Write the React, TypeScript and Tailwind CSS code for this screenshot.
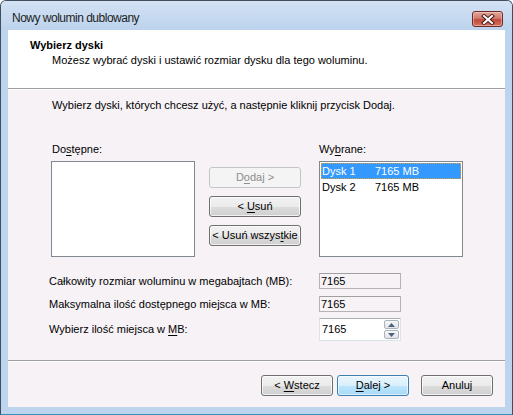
import React from 'react';

const font = { fontFamily: '"Liberation Sans", Arial, sans-serif' };

const Btn = ({ children, w = 'w-[92px]', variant = 'normal' }: { children: React.ReactNode; w?: string; variant?: 'normal' | 'disabled' | 'default' }) => {
    const base = `${w} h-[21px] rounded-[3px] border text-[11px] flex items-center justify-center leading-none`;
    if (variant === 'disabled') {
        return <div className={`${base} border-[#c3c6c9] bg-[#f4f4f4] text-[#8d8d8d]`}><span>{children}</span></div>;
    }
    if (variant === 'default') {
        return (
            <div className={`${base} border-[#3c7fb1] bg-[linear-gradient(to_bottom,#eaf6fd_0%,#d9f0fc_50%,#bee6fd_51%,#a7d9f5_100%)] text-black shadow-[inset_0_0_0_1px_rgba(255,255,255,0.6)]`}>
                <span>{children}</span>
            </div>
        );
    }
    return (
        <div className={`${base} border-[#707070] bg-[linear-gradient(to_bottom,#f2f2f2_0%,#ebebeb_50%,#dddddd_51%,#cfcfcf_100%)] text-black shadow-[inset_0_0_0_1px_rgba(255,255,255,0.7)]`}>
            <span>{children}</span>
        </div>
    );
};

const U = ({ children }: { children: React.ReactNode }) => <span className="underline underline-offset-[2px]">{children}</span>;

const CloseGlyph = () => (
    <svg width="14" height="11" viewBox="0 0 14 11">
        <path d="M3 2 L11 9 M11 2 L3 9" stroke="#4a1d18" strokeWidth="4" strokeLinecap="square" fill="none" />
        <path d="M3 2 L11 9 M11 2 L3 9" stroke="#ffffff" strokeWidth="2" strokeLinecap="square" fill="none" />
    </svg>
);

const SpinArrow = ({ up }: { up?: boolean }) => (
    <svg width="7" height="4" viewBox="0 0 7 4">
        <path d={up ? 'M0 4 L3.5 0 L7 4 Z' : 'M0 0 L3.5 4 L7 0 Z'} fill="#4d6185" />
    </svg>
);

export default function App() {
    return (
        <div className="w-[513px] h-[415px] flex flex-col bg-[#bdd4ef] border border-[#434e5c] border-b-[#3a8db3] rounded-t-[6px] overflow-hidden text-black" style={font}>
            {/* Title bar */}
            <div className="h-[29px] flex items-start bg-[linear-gradient(to_bottom,#d3e2f4,#bcd2ed)]">
                <div className="pl-[11px] pt-[10px] text-[12px] leading-[15px] tracking-[-0.5px] text-[#1e1e1e]">
                    Nowy wolumin dublowany
                </div>
                <div className="ml-auto mr-[9px] mt-[10px] w-[31px] h-[16px] rounded-[3px] border border-[#6d2b24] bg-[linear-gradient(to_bottom,#e4a59b_0%,#d27a6e_45%,#c2483a_55%,#d37561_100%)] flex items-center justify-center shadow-[inset_0_0_0_1px_rgba(255,220,210,0.45)]">
                    <CloseGlyph />
                </div>
            </div>

            {/* Client area */}
            <div className="flex-1 mx-[7px] mb-[7px] flex flex-col bg-[#f6f2f6]">
                <div className="h-[58px] bg-white pl-[22px] pt-[9px]">
                    <div className="text-[11px] font-bold leading-[13px]">Wybierz dyski</div>
                    <div className="text-[11px] leading-[13px] mt-[2px] pl-[22px]">Możesz wybrać dyski i ustawić rozmiar dysku dla tego woluminu.</div>
                </div>
                <div className="h-px bg-[#a0a0a0]" />
                <div className="h-px bg-white" />

                <div className="flex-1 flex flex-col pl-[43px] text-[11px] leading-[13px]">
                    <div className="mt-[9px] pl-[1px]">Wybierz dyski, których chcesz użyć, a następnie kliknij przycisk Dodaj.</div>

                    <div className="mt-[31px] flex items-start">
                        <div className="flex flex-col">
                            <div className="pl-[1px]">Do<U>s</U>tępne:</div>
                            <div className="mt-[5px] w-[144px] h-[96px] bg-white border border-[#828790]" />
                        </div>
                        <div className="ml-[14px] mt-[24px] flex flex-col gap-[8px]">
                            <Btn variant="disabled">D<U>o</U>daj &gt;</Btn>
                            <Btn>&lt; <U>U</U>suń</Btn>
                            <Btn>&lt; Usuń wszys<U>t</U>kie</Btn>
                        </div>
                        <div className="ml-[18px] flex flex-col">
                            <div>Wy<U>b</U>rane:</div>
                            <div className="mt-[5px] w-[144px] h-[96px] bg-white border border-[#828790] p-[1px]">
                                <div className="h-[16px] flex items-center bg-[#3399ff] text-white outline-1 outline-dotted outline-[#d8a040] -outline-offset-1">
                                    <span className="w-[54px] pl-[1px]">Dysk 1</span>
                                    <span>7165 MB</span>
                                </div>
                                <div className="h-[16px] flex items-center">
                                    <span className="w-[54px] pl-[1px]">Dysk 2</span>
                                    <span>7165 MB</span>
                                </div>
                            </div>
                        </div>
                    </div>

                    <div className="mt-[16px] -ml-[2px] flex flex-col gap-[7px]">
                        <div className="flex items-center">
                            <div className="w-[270px]">Całkowity rozmiar woluminu w megabajtach (MB):</div>
                            <div className="w-[82px] h-[16px] border border-[#b4b4b4] border-t-[#a0a0a0] flex items-center pl-[1px]">7165</div>
                        </div>
                        <div className="flex items-center">
                            <div className="w-[270px]">Maksymalna ilość dostępnego miejsca w MB:</div>
                            <div className="w-[82px] h-[16px] border border-[#b4b4b4] border-t-[#a0a0a0] flex items-center pl-[1px]">7165</div>
                        </div>
                        <div className="flex items-center -mt-[1px]">
                            <div className="w-[270px]">Wybierz ilość miejsca w <U>M</U>B:</div>
                            <div className="w-[82px] h-[23px] bg-white border border-[#dde2e8] border-t-[#abadb3] flex items-center">
                                <span className="pl-[2px] flex-1">7165</span>
                                <div className="flex flex-col gap-[1px] mr-[1px]">
                                    <div className="w-[15px] h-[9px] border border-[#a9b3bf] rounded-[2px] bg-[linear-gradient(to_bottom,#f7f7f7,#e4e4e4)] flex items-center justify-center">
                                        <SpinArrow up />
                                    </div>
                                    <div className="w-[15px] h-[9px] border border-[#a9b3bf] rounded-[2px] bg-[linear-gradient(to_bottom,#f7f7f7,#e4e4e4)] flex items-center justify-center">
                                        <SpinArrow />
                                    </div>
                                </div>
                            </div>
                        </div>
                    </div>
                </div>

                {/* Footer */}
                <div className="h-px bg-[#a0a0a0]" />
                <div className="h-px bg-white" />
                <div className="flex justify-end pt-[13px] pb-[11px] pr-[12px]">
                    <Btn w="w-[72px]">&lt; <U>W</U>stecz</Btn>
                    <div className="ml-[4px]">
                        <Btn w="w-[72px]" variant="default"><U>D</U>alej &gt;</Btn>
                    </div>
                    <div className="ml-[12px]">
                        <Btn w="w-[72px]">Anuluj</Btn>
                    </div>
                </div>
            </div>
        </div>
    );
}
